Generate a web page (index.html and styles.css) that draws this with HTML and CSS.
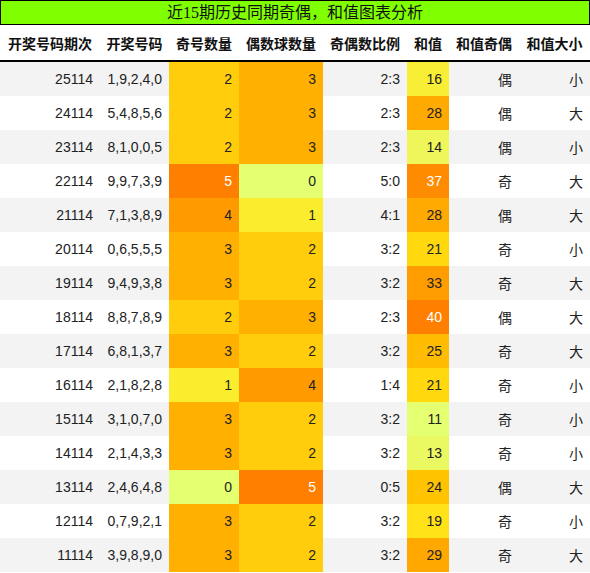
FILE: index.html
```html
<!DOCTYPE html>
<html lang="zh-CN">
<head>
  <meta charset="UTF-8" />
  <meta name="viewport" content="width=device-width, initial-scale=1.0" />
  <title>近15期历史同期奇偶，和值图表分析</title>
  <link rel="stylesheet" href="styles.css">
</head>
<body>
  <div class="title">近15期历史同期奇偶，和值图表分析</div>
  <table class="stats">
    <colgroup>
      <col class="w-issue">
      <col class="w-nums">
      <col class="w-odd">
      <col class="w-even">
      <col class="w-ratio">
      <col class="w-sum">
      <col class="w-parity">
      <col class="w-size">
    </colgroup>
    <thead>
      <tr>
        <th>开奖号码期次</th>
        <th>开奖号码</th>
        <th>奇号数量</th>
        <th>偶数球数量</th>
        <th>奇偶数比例</th>
        <th>和值</th>
        <th>和值奇偶</th>
        <th>和值大小</th>
      </tr>
    </thead>
    <tbody>
      <tr><td>25114</td><td>1,9,2,4,0</td><td class="c2">2</td><td class="c3">3</td><td>2:3</td><td style="background:#f8ee35">16</td><td>偶</td><td>小</td></tr>
      <tr><td>24114</td><td>5,4,8,5,6</td><td class="c2">2</td><td class="c3">3</td><td>2:3</td><td style="background:#ffaa00">28</td><td>偶</td><td>大</td></tr>
      <tr><td>23114</td><td>8,1,0,0,5</td><td class="c2">2</td><td class="c3">3</td><td>2:3</td><td style="background:#eef65a">14</td><td>偶</td><td>小</td></tr>
      <tr><td>22114</td><td>9,9,7,3,9</td><td class="c5">5</td><td class="c0">0</td><td>5:0</td><td class="hot" style="background:#ff8c00">37</td><td>奇</td><td>大</td></tr>
      <tr><td>21114</td><td>7,1,3,8,9</td><td class="c4">4</td><td class="c1">1</td><td>4:1</td><td style="background:#ffaa00">28</td><td>偶</td><td>大</td></tr>
      <tr><td>20114</td><td>0,6,5,5,5</td><td class="c3">3</td><td class="c2">2</td><td>3:2</td><td style="background:#ffd90e">21</td><td>奇</td><td>小</td></tr>
      <tr><td>19114</td><td>9,4,9,3,8</td><td class="c3">3</td><td class="c2">2</td><td>3:2</td><td style="background:#ff9c00">33</td><td>奇</td><td>大</td></tr>
      <tr><td>18114</td><td>8,8,7,8,9</td><td class="c2">2</td><td class="c3">3</td><td>2:3</td><td class="hot" style="background:#ff7f00">40</td><td>偶</td><td>大</td></tr>
      <tr><td>17114</td><td>6,8,1,3,7</td><td class="c3">3</td><td class="c2">2</td><td>3:2</td><td style="background:#ffbc00">25</td><td>奇</td><td>大</td></tr>
      <tr><td>16114</td><td>2,1,8,2,8</td><td class="c1">1</td><td class="c4">4</td><td>1:4</td><td style="background:#ffd90e">21</td><td>奇</td><td>小</td></tr>
      <tr><td>15114</td><td>3,1,0,7,0</td><td class="c3">3</td><td class="c2">2</td><td>3:2</td><td style="background:#e4ff70">11</td><td>奇</td><td>小</td></tr>
      <tr><td>14114</td><td>2,1,4,3,3</td><td class="c3">3</td><td class="c2">2</td><td>3:2</td><td style="background:#eaf962">13</td><td>奇</td><td>小</td></tr>
      <tr><td>13114</td><td>2,4,6,4,8</td><td class="c0">0</td><td class="c5">5</td><td>0:5</td><td style="background:#ffc300">24</td><td>偶</td><td>大</td></tr>
      <tr><td>12114</td><td>0,7,9,2,1</td><td class="c3">3</td><td class="c2">2</td><td>3:2</td><td style="background:#ffe318">19</td><td>奇</td><td>小</td></tr>
      <tr><td>11114</td><td>3,9,8,9,0</td><td class="c3">3</td><td class="c2">2</td><td>3:2</td><td style="background:#ffa800">29</td><td>奇</td><td>大</td></tr>
    </tbody>
  </table>
</body>
</html>
```

FILE: styles.css
```css
body {
  margin: 0;
  padding: 0;
  background-color: #fff;
  color: #222;
  font-family: "Liberation Sans", "Noto Sans CJK SC", sans-serif;
}

.title {
  height: 23px;
  line-height: 23px;
  border: 1px solid #000;
  background-color: #80ff00;
  color: #111;
  text-align: center;
  font-size: 16px;
  font-family: "Liberation Serif", "Noto Sans CJK SC", serif;
}

.stats {
  width: 590px;
  border-collapse: collapse;
  table-layout: fixed;
  font-size: 14px;
}

.w-issue { width: 100px; }
.w-nums { width: 69px; }
.w-odd { width: 70px; }
.w-even { width: 84px; }
.w-ratio { width: 84px; }
.w-sum { width: 42px; }
.w-parity { width: 70px; }
.w-size { width: 71px; }

.stats th {
  height: 35px;
  padding: 0;
  text-align: center;
  font-weight: bold;
  color: #111;
  border-bottom: 2px solid #000;
  white-space: nowrap;
}

.stats td {
  height: 34px;
  padding: 0 7px 0 0;
  text-align: right;
  white-space: nowrap;
}

.stats tbody tr:nth-child(odd) {
  background-color: #f3f3f3;
}

.stats tbody tr:nth-child(even) {
  background-color: #fff;
}

/* colour scale for the ball counts */
.c0 { background-color: #e4ff70; }
.c1 { background-color: #faed2e; }
.c2 { background-color: #ffcd0c; }
.c3 { background-color: #ffb000; }
.c4 { background-color: #ff9a00; }
.c5 { background-color: #ff8000; color: #fff; }

.hot {
  color: #fff;
}
```
